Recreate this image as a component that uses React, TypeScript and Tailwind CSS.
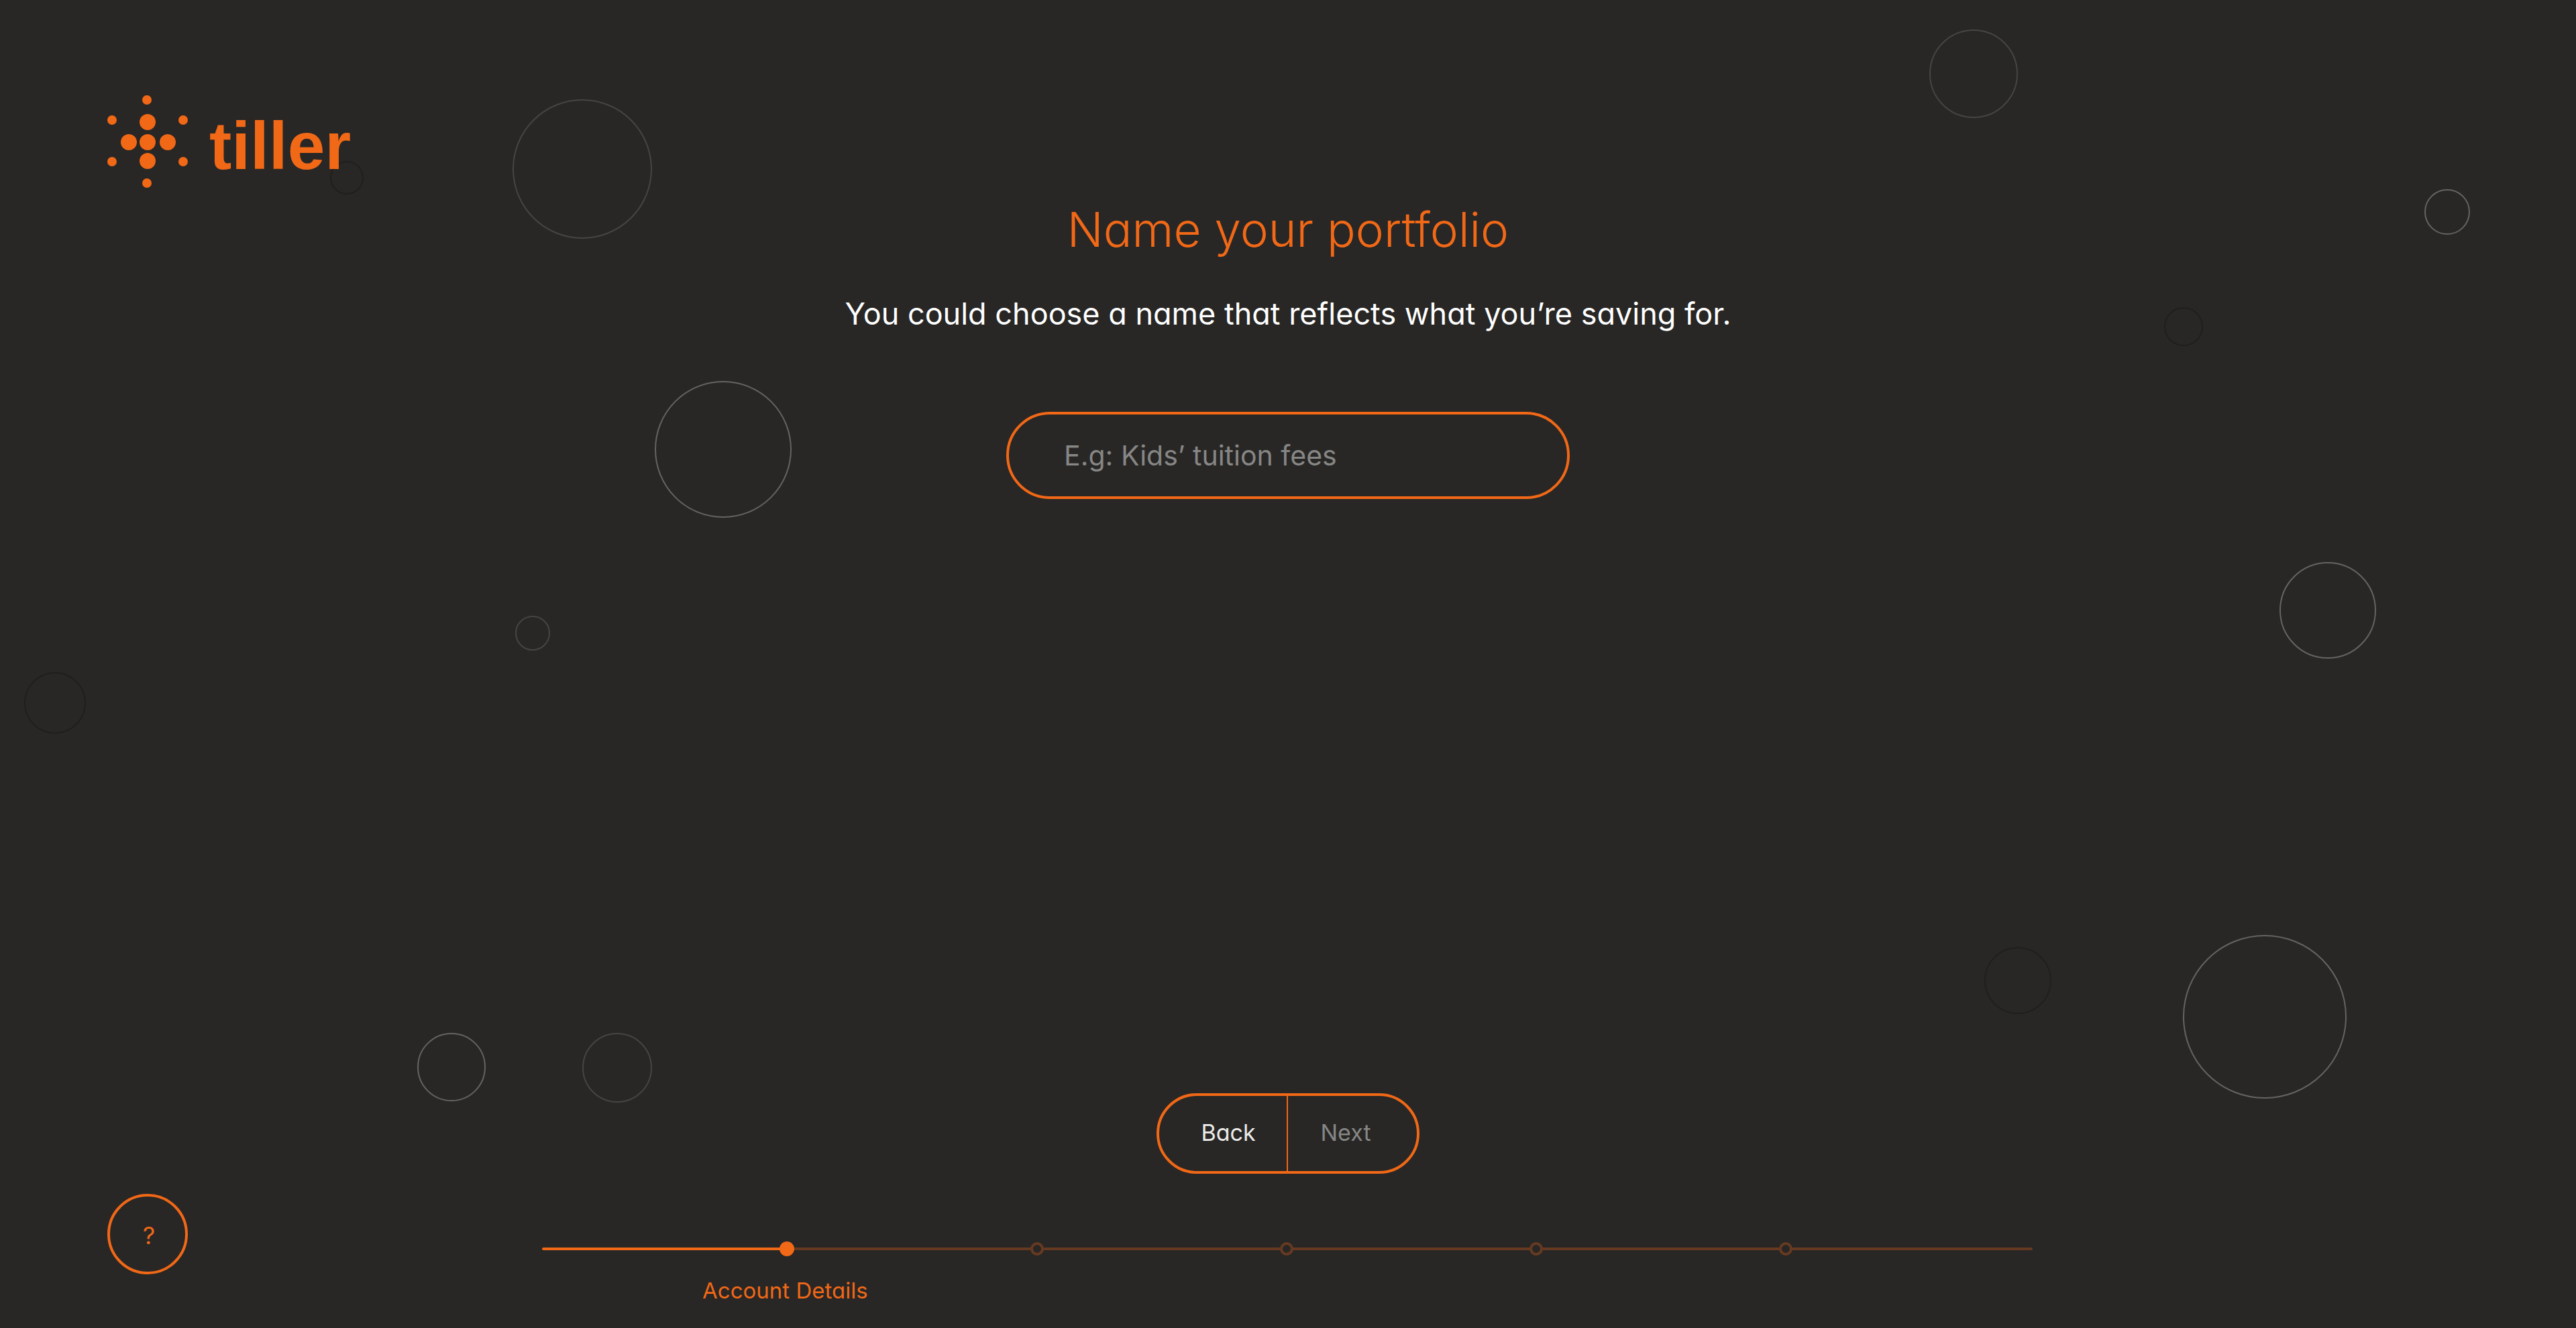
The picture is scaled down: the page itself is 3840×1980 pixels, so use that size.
import { useState } from "react";

type Tone = "light" | "mid" | "dark";

const toneClass: Record<Tone, string> = {
  light: "stroke-[#656461]",
  mid: "stroke-[#464543]",
  dark: "stroke-[#201f1d]",
};

const bubbles: { cx: number; cy: number; r: number; tone: Tone }[] = [
  { cx: 868, cy: 252, r: 103, tone: "mid" },
  { cx: 1078, cy: 670, r: 101, tone: "light" },
  { cx: 794, cy: 944, r: 25, tone: "mid" },
  { cx: 82, cy: 1048, r: 45, tone: "dark" },
  { cx: 673, cy: 1591, r: 50, tone: "light" },
  { cx: 920, cy: 1592, r: 51, tone: "mid" },
  { cx: 2942, cy: 110, r: 65, tone: "mid" },
  { cx: 3648, cy: 316, r: 33, tone: "light" },
  { cx: 3255, cy: 487, r: 28, tone: "dark" },
  { cx: 3470, cy: 910, r: 71, tone: "light" },
  { cx: 3008, cy: 1462, r: 49, tone: "dark" },
  { cx: 3376, cy: 1516, r: 121, tone: "light" },
  { cx: 517, cy: 265, r: 24, tone: "dark" },
];

function Bubbles() {
  return (
    <svg
      aria-hidden="true"
      viewBox="0 0 3840 1980"
      preserveAspectRatio="xMidYMid slice"
      className="pointer-events-none absolute inset-0 size-full fill-none stroke-2"
    >
      {bubbles.map((b) => (
        <circle key={`${b.cx}-${b.cy}`} cx={b.cx} cy={b.cy} r={b.r} className={toneClass[b.tone]} />
      ))}
    </svg>
  );
}

const smallDots = [
  [59, 7],
  [7, 37],
  [113, 37],
  [7, 99],
  [113, 99],
  [59, 131],
];

const largeDots = [
  [60, 40],
  [32, 70],
  [60, 70],
  [90, 70],
  [60, 98],
];

function Logo() {
  return (
    <a href="#" aria-label="tiller" className="flex items-center gap-8">
      <svg aria-hidden="true" viewBox="0 0 120 138" className="h-[138px] w-[120px] fill-current">
        {smallDots.map(([x, y]) => (
          <circle key={`${x}-${y}`} cx={x} cy={y} r="7" />
        ))}
        {largeDots.map(([x, y]) => (
          <circle key={`${x}-${y}`} cx={x} cy={y} r="12" />
        ))}
      </svg>
      <span className="pt-3 font-['Liberation_Sans',Arial,sans-serif] text-[100px] leading-[120px] font-bold">
        tiller
      </span>
    </a>
  );
}

const steps = ["Account Details", "Step 2", "Step 3", "Step 4", "Step 5"];

function Progress({ current }: { current: number }) {
  return (
    <nav aria-label="Progress" className="flex flex-col gap-[30px]">
      <ol className="flex h-5 items-center">
        {steps.map((step, i) => (
          <li
            key={step}
            aria-label={step}
            aria-current={i === current ? "step" : undefined}
            className="flex flex-1 items-center"
          >
            <span
              className={
                i <= current
                  ? "h-1 flex-1 rounded-l-full bg-[#f16817]"
                  : "h-1 flex-1 bg-[#663a21]"
              }
            />
            <span
              className={
                i <= current
                  ? "relative -mx-1 size-[22px] rounded-full bg-[#f16817]"
                  : "relative -mx-1 size-5 rounded-full border-4 border-[#663a21] bg-[#282725]"
              }
            />
          </li>
        ))}
        <li aria-hidden="true" className="h-1 w-[362px] rounded-r-full bg-[#663a21]" />
      </ol>
      <p className="w-1/3 pr-4 text-center text-[33px] leading-[44px] text-[#f16817]">
        {steps[current]}
      </p>
    </nav>
  );
}

export default function App() {
  const [name, setName] = useState("");

  return (
    <div className="relative flex min-h-screen flex-col bg-[#282725] font-['Inter',sans-serif] text-white [font-feature-settings:'cv11']">
      <Bubbles />

      <header className="relative flex px-40 pt-[142px] text-[#f16817]">
        <Logo />
      </header>

      <main className="relative flex flex-1 flex-col items-center">
        <h1 className="mt-[22px] text-[71px] leading-[80px] font-light text-[#f16817]">
          <label htmlFor="portfolio-name">Name your portfolio</label>
        </h1>
        <p className="mt-[58px] text-[45px] leading-[56px]">
          You could choose a name that reflects what you’re saving for.
        </p>
        <input
          id="portfolio-name"
          type="text"
          value={name}
          onChange={(e) => setName(e.target.value)}
          placeholder="E.g: Kids’ tuition fees"
          className="mt-[118px] h-[130px] w-[840px] rounded-full border-4 border-[#f16817] bg-transparent px-[82px] text-[41px] outline-none placeholder:text-[#868685]"
        />
        <div className="mt-auto flex h-[120px] overflow-hidden rounded-full border-4 border-[#f16817] text-[34px]">
          <button
            type="button"
            className="w-48 border-r-2 border-[#f16817] pb-1 pl-4 text-[#ebebea]"
          >
            Back
          </button>
          <button
            type="button"
            disabled={name === ""}
            className="w-48 pr-5 pb-1 text-white disabled:text-[#868685]"
          >
            Next
          </button>
        </div>
      </main>

      <footer className="relative mt-[30px] grid grid-cols-[808fr_2222fr_810fr] pb-[34px]">
        <div className="pl-40">
          <button
            type="button"
            aria-label="Help"
            className="size-[120px] rounded-full border-4 border-[#f16817] pt-1 pl-1 text-[36px] text-[#f16817]"
          >
            ?
          </button>
        </div>
        <div className="pt-[72px]">
          <Progress current={0} />
        </div>
      </footer>
    </div>
  );
}
